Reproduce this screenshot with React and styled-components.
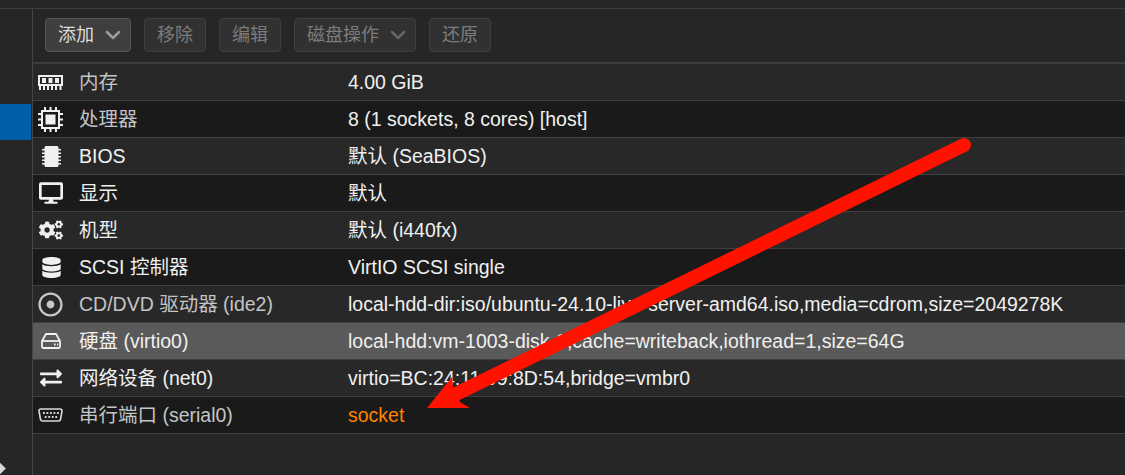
import React from 'react'
import styled, { createGlobalStyle } from 'styled-components'
import { FaDesktop, FaCogs, FaDatabase, FaRegDotCircle, FaExchangeAlt } from 'react-icons/fa'
import { FiChevronDown } from 'react-icons/fi'

const GlobalStyle = createGlobalStyle`
  html, body {
    margin: 0;
    padding: 0;
    background: #262626;
  }
  body {
    font-family: "Liberation Sans", "Noto Sans CJK SC", sans-serif;
  }
`

const Page = styled.div`
  position: relative;
  width: 1125px;
  height: 475px;
  overflow: hidden;
  display: flex;
  flex-direction: column;
  background: #262626;
`
const TopStrip = styled.div`
  height: 8px;
  flex: none;
  border-bottom: 1px solid #3d3d3d;
`
const Body = styled.div`
  flex: 1;
  min-height: 0;
  display: flex;
`
const Sidebar = styled.div`
  width: 32px;
  flex: none;
  display: flex;
  flex-direction: column;
  padding-top: 95px;
  border-right: 1px solid #454545;
  overflow: hidden;
`
const ActiveItem = styled.div`
  width: 31px;
  height: 36px;
  background: #005fa8;
`
const Expander = styled.div`
  width: 9px;
  height: 9px;
  margin: auto 0 2px -5px;
  background: #d8d8d8;
  transform: rotate(45deg);
`
const Main = styled.div`
  flex: 1;
  min-width: 0;
  display: flex;
  flex-direction: column;
`
const Toolbar = styled.div`
  height: 55px;
  flex: none;
  box-sizing: border-box;
  display: flex;
  align-items: center;
  gap: 13px;
  padding: 0 0 1px 12px;
  border-bottom: 2px solid #3d3d3d;
`
const Button = styled.div`
  height: 34px;
  box-sizing: border-box;
  display: flex;
  align-items: center;
  justify-content: ${(p) => (p.$menu ? 'flex-start' : 'center')};
  gap: 7px;
  width: ${(p) => p.$w}px;
  padding-left: ${(p) => (p.$menu ? '12px' : '0')};
  border-radius: 4px;
  font-size: 18px;
  line-height: 20px;
  border: 1px solid ${(p) => (p.$off ? '#3f3f3f' : '#585858')};
  background: ${(p) => (p.$off ? '#313131' : '#3f3f3f')};
  color: ${(p) => (p.$off ? '#7c7c7c' : '#dcdcdc')};
  svg {
    font-size: 24px;
    stroke-width: 2.5;
    color: ${(p) => (p.$off ? '#666' : '#9c9c9c')};
  }
`
const Row = styled.div`
  height: 37px;
  flex: none;
  box-sizing: border-box;
  display: grid;
  grid-template-columns: 34px 269px 1fr;
  align-items: center;
  border-bottom: 1px solid #3f3f3f;
  font-size: 19.5px;
  line-height: 22px;
  white-space: nowrap;
  background: ${(p) => (p.$selected ? '#5a5a5a' : p.$odd ? '#1a1a1a' : '#282828')};
`
const IconCell = styled.div`
  display: flex;
  align-items: center;
  justify-content: center;
  padding-left: ${(p) => (p.$shift ? '2px' : '0')};
  color: #f0f0f0;
`
const Label = styled.div`
  padding-left: 12px;
  color: ${(p) => (p.$dim ? '#c4c4c4' : '#f0f0f0')};
`
const Value = styled.div`
  padding-left: 12px;
  color: ${(p) => (p.$warn ? '#ff8400' : '#f0f0f0')};
`
const ArrowLayer = styled.svg`
  position: absolute;
  left: 0;
  top: 0;
  pointer-events: none;
`

const MemoryIcon = () => (
  <svg width="25" height="17" viewBox="0 0 25 17" fill="#f0f0f0">
    <path d="M0 1h25v11H0zM2 3v7h21V3z" fillRule="evenodd" />
    <path d="M4 4h4v5H4zM10.500 4h4v5h-4zM17 4h4v5h-4z" />
    <path d="M1 12h2v4H1zM5 12h2v4H5zM9 12h2v4H9zM13 12h2v4h-2zM17 12h2v4h-2zM21.500 12h2v4h-2z" />
  </svg>
)

const ProcessorIcon = () => (
  <svg width="25" height="25" viewBox="0 0 25 25" fill="#f0f0f0">
    <path d="M3 3h19v19H3zM5 5v15h15V5z" fillRule="evenodd" />
    <path d="M7.500 7.500h10v10h-10z" />
    <path d="M6 0h2v3H6zM11.500 0h2v3h-2zM17 0h2v3h-2zM6 22h2v3H6zM11.500 22h2v3h-2zM17 22h2v3h-2zM0 6h3v2H0zM0 11.500h3v2H0zM0 17h3v2H0zM22 6h3v2h-3zM22 11.500h3v2h-3zM22 17h3v2h-3z" />
  </svg>
)

const BiosIcon = () => (
  <svg width="19" height="21" viewBox="0 0 19 21" fill="#f0f0f0">
    <rect x="2.500" y="0" width="14" height="21" rx="1.500" />
    <path d="M0 3h3v1.600H0zM0 6.500h3v1.600H0zM0 10h3v1.600H0zM0 13.500h3v1.600H0zM0 17h3v1.600H0zM16 3h3v1.600h-3zM16 6.500h3v1.600h-3zM16 10h3v1.600h-3zM16 13.500h3v1.600h-3zM16 17h3v1.600h-3z" />
  </svg>
)

const HddIcon = () => (
  <svg width="20" height="16" viewBox="0 0 20 16" fill="none" stroke="#f0f0f0" strokeWidth="1.800">
    <path d="M5 1h10l4 7v5.500a1.500 1.500 0 0 1-1.500 1.500h-15A1.500 1.500 0 0 1 1 13.500V8z" />
    <path d="M1 8h18" />
    <path d="M13 11.500h1.600M16 11.500h1.200" strokeWidth="2" />
  </svg>
)

const SerialIcon = () => (
  <svg width="25" height="14" viewBox="0 0 25 14" fill="none">
    <path
      d="M3 1h19c1.200 0 2 .8 2 2l-1.400 8c-.2 1.200-1 2-2.100 2H4.500c-1.100 0-1.900-.8-2.100-2L1 3c0-1.200.8-2 2-2z"
      stroke="#d8d8d8"
      strokeWidth="1.600"
    />
    <path
      d="M5 5h1.800M8.500 5h1.800M12 5h1.800M15.500 5h1.800M19 5h1.800M6.800 9h1.800M10.300 9h1.800M13.800 9h1.800M17.300 9h1.800"
      stroke="#d8d8d8"
      strokeWidth="2"
    />
  </svg>
)

const rows = [
  { icon: <MemoryIcon />, label: '内存', value: '4.00 GiB', dim: true },
  { icon: <ProcessorIcon />, label: '处理器', value: '8 (1 sockets, 8 cores) [host]', dim: true },
  { icon: <BiosIcon />, label: 'BIOS', value: '默认 (SeaBIOS)', shift: true },
  { icon: <FaDesktop size={24} />, label: '显示', value: '默认', shift: true },
  { icon: <FaCogs size={24} />, label: '机型', value: '默认 (i440fx)', shift: true },
  { icon: <FaDatabase size={21} />, label: 'SCSI 控制器', value: 'VirtIO SCSI single', shift: true },
  {
    icon: <FaRegDotCircle size={25} color="#c8c8c8" />,
    label: 'CD/DVD 驱动器 (ide2)',
    value: 'local-hdd-dir:iso/ubuntu-24.10-live-server-amd64.iso,media=cdrom,size=2049278K',
    dim: true,
  },
  {
    icon: <HddIcon />,
    label: '硬盘 (virtio0)',
    value: 'local-hdd:vm-1003-disk-0,cache=writeback,iothread=1,size=64G',
    selected: true,
    shift: true,
  },
  {
    icon: <FaExchangeAlt size={22} />,
    label: '网络设备 (net0)',
    value: 'virtio=BC:24:11:99:8D:54,bridge=vmbr0',
    shift: true,
  },
  { icon: <SerialIcon />, label: '串行端口 (serial0)', value: 'socket', dim: true, warn: true },
]

export default function App() {
  return (
    <Page>
      <GlobalStyle />
      <TopStrip />
      <Body>
        <Sidebar>
          <ActiveItem />
          <Expander />
        </Sidebar>
        <Main>
          <Toolbar>
            <Button $w={86} $menu>
              添加 <FiChevronDown />
            </Button>
            <Button $w={62} $off>
              移除
            </Button>
            <Button $w={62} $off>
              编辑
            </Button>
            <Button $w={122} $off $menu>
              磁盘操作 <FiChevronDown />
            </Button>
            <Button $w={62} $off>
              还原
            </Button>
          </Toolbar>
          {rows.map((r, i) => (
            <Row key={r.label} $odd={i % 2 === 1} $selected={r.selected}>
              <IconCell $shift={r.shift}>{r.icon}</IconCell>
              <Label $dim={r.dim}>{r.label}</Label>
              <Value $warn={r.warn}>{r.value}</Value>
            </Row>
          ))}
        </Main>
      </Body>
      <ArrowLayer width="1125" height="475" viewBox="0 0 1125 475">
        <path d="M964 145L456 394" stroke="#ff1200" strokeWidth="14" strokeLinecap="round" fill="none" />
        <path d="M427 408L452 377L453 387L460 402L470 408Z" fill="#ff1200" />
      </ArrowLayer>
    </Page>
  )
}
